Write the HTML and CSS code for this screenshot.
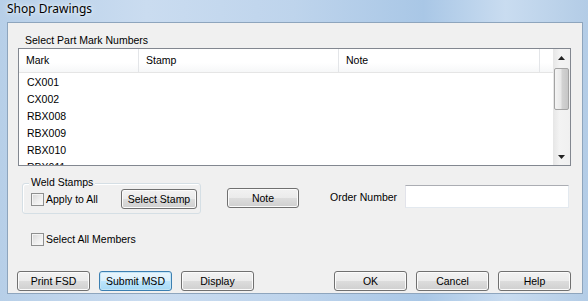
FILE: index.html
```html
<!DOCTYPE html>
<html>
<head>
    <title>Shop Drawings</title>
    <link rel="stylesheet" href="styles.css">
</head>
<body>

<div class="window">
    <div class="titlebar">Shop Drawings</div>
    <div class="client">
        <div class="list-title">Select Part Mark Numbers</div>
        <div class="listbox">
            <div class="list-main">
                <div class="list-head">
                    <div class="col col-mark">Mark</div>
                    <div class="col col-stamp">Stamp</div>
                    <div class="col col-note">Note</div>
                    <div class="col col-fill"></div>
                </div>
                <div class="list-rows">
                    <div class="row">CX001</div>
                    <div class="row">CX002</div>
                    <div class="row">RBX008</div>
                    <div class="row">RBX009</div>
                    <div class="row">RBX010</div>
                    <div class="row">RBX011</div>
                </div>
            </div>
            <div class="vscroll">
                <div class="sb-btn">
                    <svg width="7" height="4" viewBox="0 0 7 4"><path d="M3.5 0 L7 4 L0 4 Z" fill="#222"/></svg>
                </div>
                <div class="sb-track"><div class="sb-thumb"></div></div>
                <div class="sb-btn">
                    <svg width="7" height="4" viewBox="0 0 7 4"><path d="M0 0 L7 0 L3.5 4 Z" fill="#222"/></svg>
                </div>
            </div>
        </div>

        <div class="mid-row">
            <div class="groupbox">
                <span class="group-label">Weld Stamps</span>
                <label class="check check-apply"><span class="box"></span>Apply to All</label>
                <button class="btn btn-stamp">Select Stamp</button>
            </div>
            <button class="btn btn-note">Note</button>
            <span class="order-label">Order Number</span>
            <div class="textbox"></div>
        </div>

        <label class="check check-all"><span class="box"></span>Select All Members</label>

        <div class="footer">
            <div class="btn-group">
                <button class="btn">Print FSD</button>
                <button class="btn btn-default">Submit MSD</button>
                <button class="btn">Display</button>
            </div>
            <div class="btn-group">
                <button class="btn">OK</button>
                <button class="btn">Cancel</button>
                <button class="btn">Help</button>
            </div>
        </div>
    </div>
</div>

</body>
</html>
```

FILE: styles.css
```css
body {
    margin: 0;
    font-family: "Liberation Sans", Arial, sans-serif;
    font-size: 10.5px;
    color: #000;
}
.window {
    width: 588px;
    height: 301px;
    box-sizing: border-box;
    padding: 0 5px 7px 7px;
    display: flex;
    flex-direction: column;
    background: linear-gradient(to right, #b7cfe8 0%, #cadcf0 25%, #bed4ec 50%, #a9c7e6 72%, #c9dcf0 86%, #b3cce6 100%);
}
.titlebar {
    height: 22px;
    line-height: 18px;
    font-family: "Noto Sans", "Open Sans", sans-serif;
    font-size: 12px;
    color: #000;
    text-shadow: 0 0 6px #e8f1fa, 0 0 3px #eef5fb;
}
.client {
    flex: 1;
    display: flex;
    flex-direction: column;
    background-color: #f0f0f0;
    border: 1px solid #8ea5bd;
    padding: 0 11px 2px 10px;
}
.list-title {
    height: 13px;
    line-height: 13px;
    margin: 11px 0 1px 7px;
}

/* list view */
.listbox {
    height: 118px;
    box-sizing: border-box;
    border: 1px solid #828790;
    background-color: #fff;
    display: flex;
    overflow: hidden;
}
.list-main {
    width: 534px;
}
.list-head {
    display: flex;
    height: 23px;
    border-bottom: 1px solid #e5e5e5;
    background: linear-gradient(#ffffff 0%, #ffffff 60%, #f6f7f8 100%);
}
.col {
    box-sizing: border-box;
    line-height: 23px;
    padding-left: 7px;
    border-right: 1px solid #e3e5e8;
}
.col-mark { width: 120px; }
.col-stamp { width: 200px; }
.col-note { width: 201px; }
.col-fill { flex: 1; border-right: none; }
.list-rows {
    padding-top: 1px;
}
.row {
    height: 17px;
    line-height: 17px;
    padding-left: 8px;
}

/* scrollbar */
.vscroll {
    width: 17px;
    display: flex;
    flex-direction: column;
    background: linear-gradient(to right, #e6e6e6, #f3f3f3 40%, #f0f0f0);
}
.sb-btn {
    height: 17px;
    display: flex;
    align-items: center;
    justify-content: center;
}
.sb-track {
    flex: 1;
    padding-top: 2px;
}
.sb-thumb {
    height: 42px;
    margin: 0 1px;
    border: 1px solid #a3a3a3;
    border-radius: 2px;
    box-sizing: border-box;
    background: linear-gradient(to right, #f4f4f4 0%, #e8e8e8 45%, #d2d2d2 55%, #c6c6c6 100%);
}

/* middle controls */
.mid-row {
    display: flex;
    align-items: flex-start;
    margin-top: 17px;
}
.mid-row > * {
    flex-shrink: 0;
}
.groupbox {
    position: relative;
    display: flex;
    align-items: center;
    margin-left: 4px;
    width: 179px;
    box-sizing: border-box;
    border: 1px solid #d5dfe5;
    border-radius: 3px;
    box-shadow: inset 1px 1px 0 #fff;
    padding: 5px 3px 4px 8px;
}
.group-label {
    position: absolute;
    left: 6px;
    top: -8px;
    line-height: 13px;
    padding: 0 2px;
    background-color: #f0f0f0;
}
.check {
    display: flex;
    align-items: center;
    height: 13px;
    line-height: 13px;
    white-space: nowrap;
}
.box {
    width: 13px;
    height: 13px;
    box-sizing: border-box;
    margin-right: 2px;
    border: 1px solid #8e8f8f;
    background: linear-gradient(135deg, #d6d6d6 0%, #eeeeee 55%, #fbfbfb 100%);
    box-shadow: inset 0 0 0 1px #f4f4f4;
}
.check-apply {
    flex: 1;
}
.check-all {
    margin: 19px 0 0 13px;
}

.btn {
    width: 73px;
    height: 20px;
    padding: 0;
    font-family: "Liberation Sans", Arial, sans-serif;
    font-size: 10.5px;
    color: #000;
    white-space: nowrap;
    border: 1px solid #707070;
    border-radius: 3px;
    background: linear-gradient(#f2f2f2 0%, #ebebeb 50%, #dddddd 50%, #cfcfcf 100%);
    box-shadow: inset 0 0 0 1px #fbfbfb;
}
.btn-default {
    border-color: #3c7fb1;
    background: linear-gradient(#eaf6fd 0%, #d9f0fc 50%, #bee6fd 50%, #a7d9f5 100%);
    box-shadow: inset 0 0 0 1px #c4e5f6;
}
.btn-stamp {
    width: 76px;
}
.btn-note {
    width: 72px;
    margin: 5px 0 0 26px;
}
.order-label {
    width: 75px;
    line-height: 13px;
    white-space: nowrap;
    margin: 8px 0 0 31px;
}
.textbox {
    width: 164px;
    height: 23px;
    box-sizing: border-box;
    margin: 2px 0 0 0;
    background-color: #fff;
    border: 1px solid;
    border-color: #abadb3 #e3e9ef #e3e9ef #e2e3ea;
}

.footer {
    margin-top: auto;
    display: flex;
    justify-content: space-between;
}
.btn-group {
    display: flex;
    gap: 9px;
}
.footer .btn-group:first-child {
    margin-left: -1px;
}
```
